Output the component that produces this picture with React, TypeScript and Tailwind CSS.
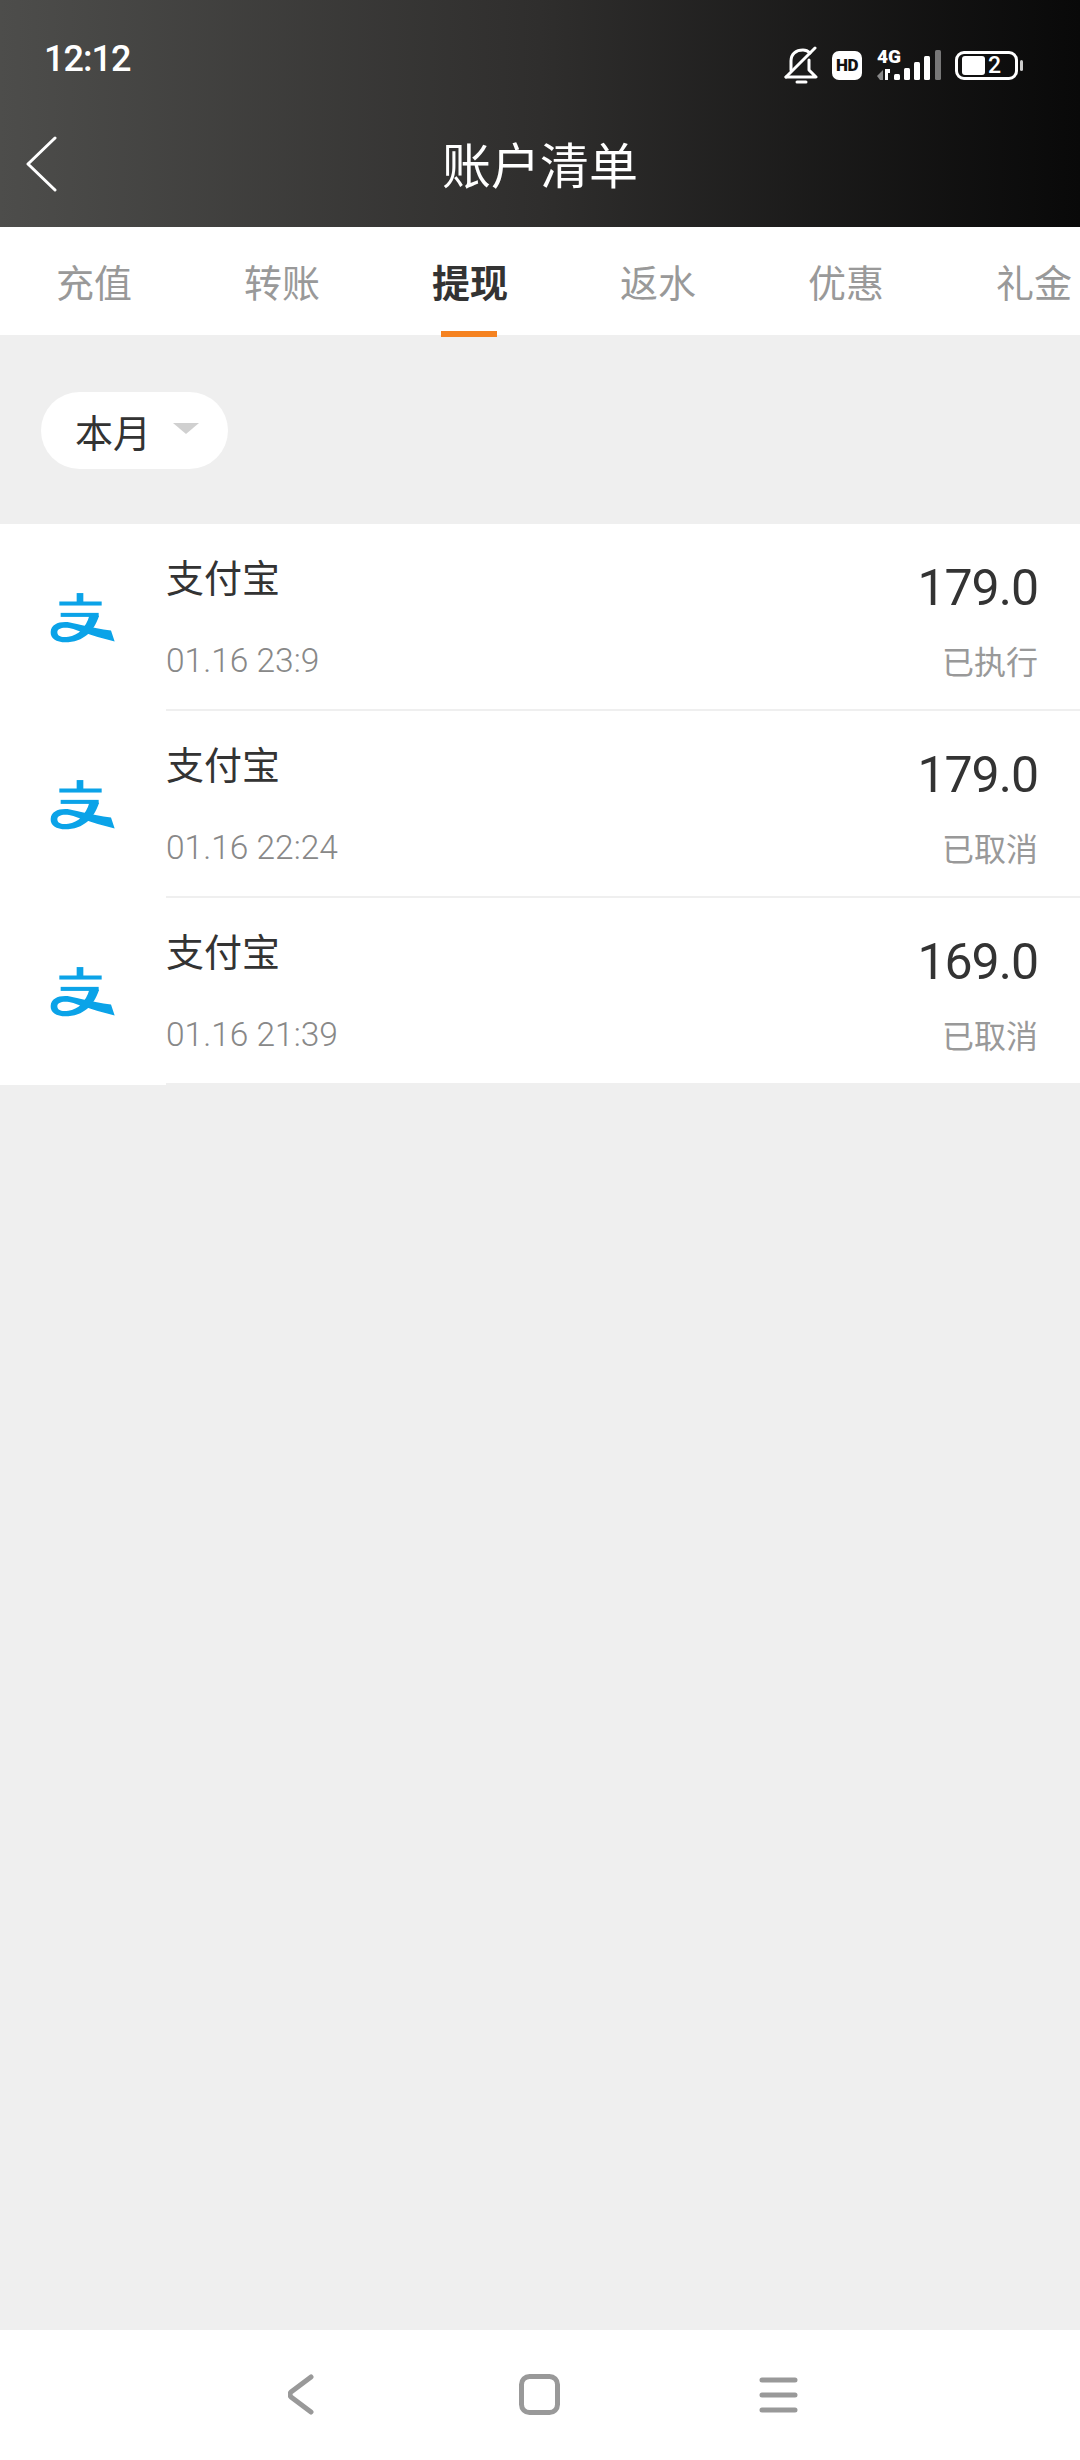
import React from 'react';

const CJK = "font-['Noto_Sans_CJK_SC','Noto_Sans',sans-serif]";

const tabs = ['充值', '转账', '提现', '返水', '优惠', '礼金'];

const records = [
    { name: '支付宝', time: '01.16 23:9', amount: '179.0', status: '已执行' },
    { name: '支付宝', time: '01.16 22:24', amount: '179.0', status: '已取消' },
    { name: '支付宝', time: '01.16 21:39', amount: '169.0', status: '已取消' },
];

const AlipayLogo = () => (
    <svg width="90" height="66" viewBox="0 0 270 180" preserveAspectRatio="none" fill="#0ba3e8">
        <rect x="110" y="22" width="20" height="26" />
        <rect x="58" y="45" width="127" height="11" />
        <rect x="62" y="76" width="114" height="11" />
        <path d="M148 84 L177 84 C167 115 140 153 85 156 C50 158 31 146 32 128 C33 106 60 98 90 102 C115 106 150 116 213 124 L224 154 C180 144 130 130 100 120 C75 113 52 116 52 129 C52 140 65 144 85 141 C115 138 138 116 148 84 Z" />
    </svg>
);

const StatusIcons = () => (
    <div className="flex items-center text-white">
        <svg width="34" height="38" viewBox="0 0 34 38" fill="none" stroke="white" strokeWidth="3" strokeLinecap="round" strokeLinejoin="round">
            <path d="M7 24 V15 C7 8 12 4 19 4 C22 4 24 5 26 7" />
            <path d="M25 14 V24 L32 31 H2" />
            <path d="M2 31 L31 2" />
            <path d="M13 36 H22" />
        </svg>
        <div className="ml-[14px] flex h-[29px] w-[30px] items-center justify-center rounded-[7px] bg-white text-[17px] font-black leading-none tracking-[-0.5px] text-[#111] font-['Roboto',sans-serif]">
            HD
        </div>
        <svg className="mb-[5px] ml-[15px]" width="64" height="37" viewBox="0 -5 64 37" fill="white">
            <text x="0" y="14" fontSize="19" fontWeight="900" fontFamily="Roboto, sans-serif">4G</text>
            <path d="M0 27 L6 21 V31 H3 Z" fill="#888" />
            <path d="M8 20 H13 L13 24 L11 24 V31 H8 Z" />
            <rect x="17" y="25" width="6" height="6" rx="1.5" />
            <rect x="27" y="19" width="6" height="12" rx="1.5" />
            <rect x="37" y="13" width="6" height="18" rx="1.5" />
            <rect x="47" y="7" width="6" height="24" rx="1.5" />
            <rect x="58" y="1" width="6" height="30" rx="1.5" fill="#777" />
        </svg>
        <div className="ml-[14px] flex h-[29px] w-[63px] items-center rounded-[9px] border-[3px] border-white pl-[4px]">
            <div className="h-[19px] w-[23px] rounded-[3px] bg-white" />
            <span className="ml-[3px] text-[23px] font-medium leading-none font-['Roboto',sans-serif]">2</span>
        </div>
        <div className="ml-[2px] h-[11px] w-[3px] rounded-full bg-[#ccc]" />
    </div>
);

const Header = () => (
    <div className="h-[227px] bg-gradient-to-r from-[#4d4d4b] via-[#2f2e2d] to-[#090909]">
        <div className="flex h-[103px] items-end justify-between pb-[17px] pl-[44px] pr-[57px]">
            <span className="mb-[9px] text-[36px] font-medium leading-none tracking-[-1px] text-white font-['Roboto',sans-serif]">12:12</span>
            <StatusIcons />
        </div>
        <div className="relative flex h-[124px] items-center justify-center pb-[5px]">
            <svg className="absolute left-[26px] top-[32px]" width="32" height="58" viewBox="0 0 32 58" fill="none" stroke="white" strokeWidth="3" strokeLinecap="round" strokeLinejoin="round">
                <path d="M29 3 L2 29 L29 55" />
            </svg>
            <span className={`text-[49px] leading-none text-white ${CJK}`}>账户清单</span>
        </div>
    </div>
);

const Tabs = () => (
    <div className="flex h-[108px] overflow-hidden bg-white">
        {tabs.map((tab, i) => (
            <div key={tab} className="relative flex h-full w-[188px] shrink-0 items-center justify-center">
                <span className={`text-[38px] leading-none ${CJK} ${i === 2 ? 'font-bold text-[#333]' : 'text-[#999]'}`}>{tab}</span>
            </div>
        ))}
    </div>
);

const Row = ({ record }: { record: (typeof records)[number] }) => (
    <div className="flex h-[187px]">
        <div className="w-[166px] shrink-0 pl-[40px] pt-[61px]">
            <AlipayLogo />
        </div>
        <div className="flex flex-1 justify-between border-b-2 border-[#efefef] pr-[42px]">
            <div className="flex flex-col">
                <span className={`mt-[33px] text-[38px] leading-none text-[#333] ${CJK}`}>{record.name}</span>
                <span className="mt-[49px] text-[33.5px] font-light leading-none text-[#888] font-['Roboto',sans-serif]">{record.time}</span>
            </div>
            <div className="flex flex-col items-end">
                <span className="mt-[39px] text-[50px] leading-none tracking-[-1px] text-[#333] font-['Roboto',sans-serif]">{record.amount}</span>
                <span className={`mt-[31px] text-[32px] leading-none text-[#999] ${CJK}`}>{record.status}</span>
            </div>
        </div>
    </div>
);

const BottomNav = () => (
    <div className="flex h-[130px] items-start bg-white pl-[288px] pt-[44px]">
        <svg width="26" height="41" viewBox="0 0 26 41" fill="none" stroke="#999" strokeWidth="5" strokeLinecap="round" strokeLinejoin="round">
            <path d="M23 3 L3 18 Q1 20.5 3 23 L23 38" />
        </svg>
        <svg className="ml-[205px]" width="41" height="41" viewBox="0 0 41 41" fill="none" stroke="#999" strokeWidth="5">
            <rect x="2.5" y="2.5" width="36" height="36" rx="8" />
        </svg>
        <svg className="ml-[199px] mt-[3px]" width="39" height="36" viewBox="0 0 39 36" fill="none" stroke="#999" strokeWidth="5" strokeLinecap="round">
            <path d="M3 3 H36 M3 18 H36 M3 33 H36" />
        </svg>
    </div>
);

export default function App() {
    return (
        <div className="flex h-[2460px] w-[1080px] flex-col overflow-hidden bg-[#efefef]">
            <Header />
            <div className="relative">
                <Tabs />
                <div className="absolute left-[441px] top-[104px] h-[6px] w-[56px] bg-[#f58220]" />
            </div>
            <div className="flex-1">
                <div className="px-[41px] pt-[57px]">
                    <div className="flex h-[77px] w-[187px] items-center rounded-full bg-white pl-[34px]">
                        <span className={`text-[38px] leading-none text-[#333] ${CJK}`}>本月</span>
                        <div className="ml-[22px] mb-[4px] h-0 w-0 border-x-[13px] border-t-[11px] border-x-transparent border-t-[#d0d0d0]" />
                    </div>
                </div>
                <div className="mt-[55px] bg-white">
                    {records.map((r, i) => <Row key={i} record={r} />)}
                </div>
            </div>
            <BottomNav />
        </div>
    );
}
